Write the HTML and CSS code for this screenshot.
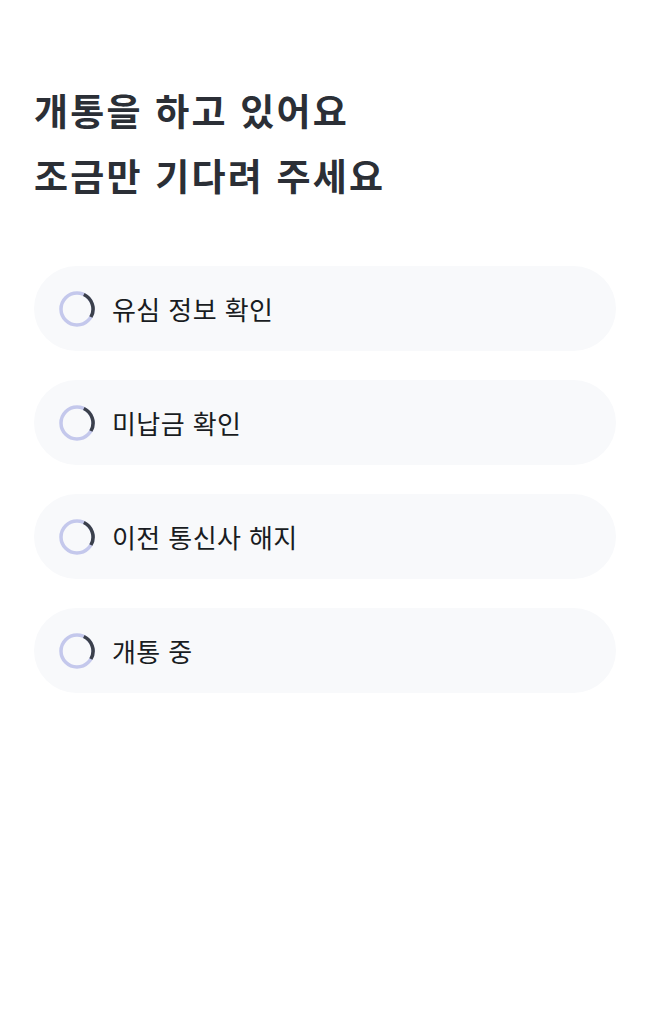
FILE: index.html
```html
<!DOCTYPE html>
<html lang="ko">
<head>
  <meta charset="UTF-8">
  <title>개통 중</title>
  <link rel="stylesheet" href="styles.css">
</head>
<body>

  <h1 class="title">개통을 하고 있어요<br>조금만 기다려 주세요</h1>

  <ul class="steps">
    <li class="step">
      <svg class="spinner" viewBox="0 0 36 36"><circle cx="18" cy="18" r="16" class="track"/><path d="M24.8 3.5 A16 16 0 0 1 31.9 26" class="arc"/></svg>
      <span>유심 정보 확인</span>
    </li>
    <li class="step">
      <svg class="spinner" viewBox="0 0 36 36"><circle cx="18" cy="18" r="16" class="track"/><path d="M24.8 3.5 A16 16 0 0 1 31.9 26" class="arc"/></svg>
      <span>미납금 확인</span>
    </li>
    <li class="step">
      <svg class="spinner" viewBox="0 0 36 36"><circle cx="18" cy="18" r="16" class="track"/><path d="M24.8 3.5 A16 16 0 0 1 31.9 26" class="arc"/></svg>
      <span>이전 통신사 해지</span>
    </li>
    <li class="step">
      <svg class="spinner" viewBox="0 0 36 36"><circle cx="18" cy="18" r="16" class="track"/><path d="M24.8 3.5 A16 16 0 0 1 31.9 26" class="arc"/></svg>
      <span>개통 중</span>
    </li>
  </ul>

</body>
</html>
```

FILE: styles.css
```css
body {
  margin: 0;
  padding: 78px 38px 0 34px;
  background-color: #ffffff;
  font-family: "Noto Sans CJK KR", "Noto Sans", sans-serif;
}

.title {
  margin: 0 0 58px;
  font-size: 37px;
  line-height: 65px;
  font-weight: 700;
  color: #2b2f36;
  letter-spacing: 2.2px;
}

.steps {
  list-style: none;
  margin: 0;
  padding: 0;
  display: flex;
  flex-direction: column;
  gap: 29px;
}

.step {
  display: flex;
  align-items: center;
  gap: 17px;
  height: 85px;
  padding-left: 25px;
  border-radius: 43px;
  background-color: #f8f9fb;
  font-size: 26px;
  letter-spacing: 0.4px;
  color: #191c22;
}

.spinner {
  width: 36px;
  height: 36px;
  flex-shrink: 0;
}

.track {
  fill: none;
  stroke: #c4c8ec;
  stroke-width: 3.5;
}

.arc {
  fill: none;
  stroke: #3b404b;
  stroke-width: 3.5;
}
```
